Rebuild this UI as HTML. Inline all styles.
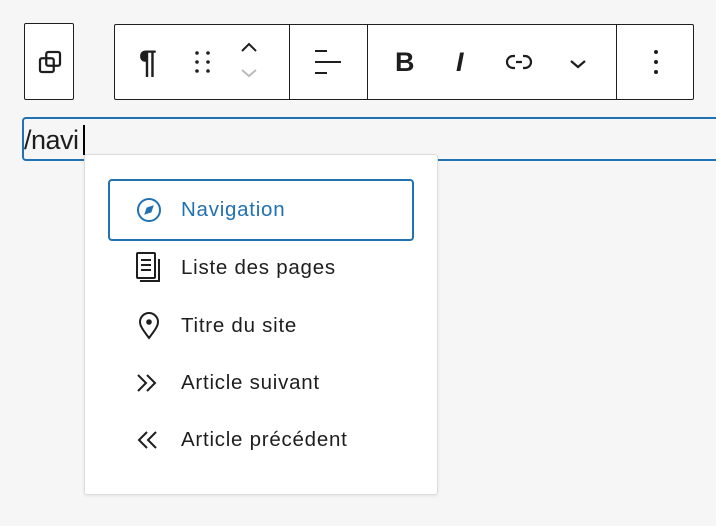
<!DOCTYPE html>
<html><head><meta charset="utf-8"><style>
html,body{margin:0;padding:0}
body{width:716px;height:526px;background:#f6f6f6;position:relative;overflow:hidden;font-family:"Liberation Sans",sans-serif;color:#1e1e1e}
.box{position:absolute;background:#fff;border:1px solid #1e1e1e;border-radius:2px;box-sizing:border-box}
.div{position:absolute;top:0;bottom:0;width:1px;background:#1e1e1e}
svg{position:absolute}
.input{position:absolute;left:22px;top:117px;width:720px;height:44px;border:2px solid #2271b1;border-radius:4px;box-sizing:border-box;background:#f6f6f6}
.pop{position:absolute;left:84px;top:154px;width:354px;height:341px;background:#fff;border:1px solid #ddd;border-radius:3px;box-sizing:border-box;box-shadow:0 1px 3px rgba(0,0,0,.08)}
.item{position:absolute;left:181px;font-size:20.5px;line-height:22px;letter-spacing:0.75px}
</style></head><body>
<div class="box" style="left:24px;top:23px;width:50px;height:77px">
<svg width="30" height="30" viewBox="0 0 24 24" style="left:10px;top:23px" fill="none" stroke="#1e1e1e" stroke-width="1.8"><rect x="9" y="4" width="11" height="11" rx="1.5"/><rect x="4" y="9" width="11" height="11" rx="1.5"/></svg>
</div>
<div class="box" style="left:114px;top:24px;width:580px;height:76px">
<div class="div" style="left:174px"></div><div class="div" style="left:252px"></div><div class="div" style="left:501px"></div>
<div style="position:absolute;left:24px;top:18px;font-size:32px;font-weight:bold;line-height:38px">¶</div>
<svg width="20" height="30" style="left:79px;top:23px" fill="#1e1e1e"><circle cx="3" cy="5" r="1.8"/><circle cx="14" cy="5" r="1.8"/><circle cx="3" cy="14" r="1.8"/><circle cx="14" cy="14" r="1.8"/><circle cx="3" cy="23" r="1.8"/><circle cx="14" cy="23" r="1.8"/></svg>
<svg width="24" height="44" style="left:124px;top:14px" fill="none" stroke-width="2"><path d="M3 12 L10 5 L17 12" stroke="#1e1e1e"/><path d="M3 31 L10 37 L17 31" stroke="#bbb"/></svg>
<svg width="30" height="30" style="left:198px;top:22px" stroke="#1e1e1e" stroke-width="2"><path d="M2 4h12M2 15h26M2 26h12"/></svg>
<div style="position:absolute;left:280px;top:22px;font-size:27px;font-weight:bold">B</div>
<div style="position:absolute;left:341px;top:22px;font-size:27px;font-style:italic;font-weight:bold">I</div>
<svg width="30" height="20" style="left:390px;top:28px" fill="none" stroke="#1e1e1e" stroke-width="2.2"><path d="M10 3H8a6 6 0 0 0 0 12h2M18 3h2a6 6 0 0 1 0 12h-2M11 9h6"/></svg>
<svg width="20" height="14" style="left:453px;top:32px" fill="none" stroke="#1e1e1e" stroke-width="2.2"><path d="M3 4l7 6 7-6"/></svg>
<svg width="10" height="30" style="left:536px;top:23px" fill="#1e1e1e"><circle cx="5" cy="4" r="2"/><circle cx="5" cy="14" r="2"/><circle cx="5" cy="24" r="2"/></svg>
</div>
<div class="input"><span style="position:absolute;left:0;top:5px;font-size:27px;line-height:32px;letter-spacing:-0.5px">/navi</span><div style="position:absolute;left:59px;top:6px;width:2px;height:30px;background:#000"></div></div>
<div class="pop"></div>
<div style="position:absolute;left:108px;top:179px;width:306px;height:62px;border:2px solid #2271b1;border-radius:4px;box-sizing:border-box;background:#fff"></div>
<svg width="28" height="28" style="left:135px;top:196px" fill="none" stroke="#2271b1" stroke-width="2"><circle cx="14" cy="14" r="11"/><path d="M18 10l-6 2-2 6 6-2z" fill="#2271b1" stroke-width="1"/></svg>
<div class="item" style="top:199px;color:#2271b1">Navigation</div>
<svg width="30" height="34" style="left:135px;top:251px" fill="none" stroke="#1e1e1e" stroke-width="2"><rect x="2" y="2" width="18" height="25" rx="1"/><path d="M6 9h10M6 14h10M6 19h10M24 8v22H5"/></svg>
<div class="item" style="top:257px">Liste des pages</div>
<svg width="28" height="30" style="left:135px;top:311px" fill="none" stroke="#1e1e1e" stroke-width="2"><path d="M14 27C8 19 5 15 5 11a9 9 0 0 1 18 0c0 4-3 8-9 16z"/><circle cx="14" cy="11" r="1.8" fill="#1e1e1e"/></svg>
<div class="item" style="top:315px">Titre du site</div>
<svg width="28" height="22" style="left:135px;top:372px" fill="none" stroke="#1e1e1e" stroke-width="2"><path d="M3 3l8 8-8 8M12 3l8 8-8 8"/></svg>
<div class="item" style="top:372px">Article suivant</div>
<svg width="28" height="22" style="left:135px;top:429px" fill="none" stroke="#1e1e1e" stroke-width="2"><path d="M12 3l-8 8 8 8M21 3l-8 8 8 8"/></svg>
<div class="item" style="top:429px">Article précédent</div>
</body></html>
